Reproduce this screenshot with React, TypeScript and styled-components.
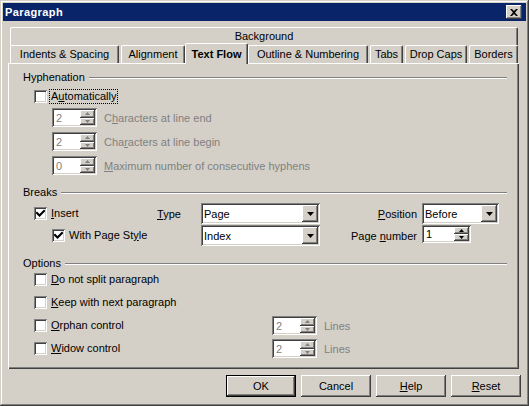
import React from 'react';
import styled, { createGlobalStyle, css } from 'styled-components';

const face = '#d4d0c8';
const shadow = '#808080';
const darkShadow = '#404040';
const highlight = '#ffffff';
const grayText = '#808080';

const raised = css`
  box-shadow: inset -1px -1px ${darkShadow}, inset 1px 1px ${highlight},
    inset -2px -2px ${shadow}, inset 2px 2px ${face};
`;

const sunken = css`
  box-shadow: inset 1px 1px ${shadow}, inset -1px -1px ${highlight},
    inset 2px 2px ${darkShadow}, inset -2px -2px ${face};
`;

const GlobalStyle = createGlobalStyle`
  html, body {
    margin: 0;
    padding: 0;
    background: ${face};
  }
  body {
    font-family: 'Liberation Sans', Arial, sans-serif;
    font-size: 11px;
    color: #000;
  }
`;

// "~" marks the mnemonic letter, the way the resource strings spell it
function Label({ text }: { text: string }) {
  const i = text.indexOf('~');
  if (i < 0) return <>{text}</>;
  return (
    <>
      {text.slice(0, i)}
      <u>{text[i + 1]}</u>
      {text.slice(i + 2)}
    </>
  );
}

function Arrow({ dir, color, w, h }: { dir: 'up' | 'down'; color: string; w: number; h: number }) {
  const points = dir === 'up' ? `0,${h} ${w},${h} ${w / 2},0` : `0,0 ${w},0 ${w / 2},${h}`;
  return (
    <svg width={w} height={h} viewBox={`0 0 ${w} ${h}`}>
      <polygon points={points} fill={color} />
    </svg>
  );
}

function Check({
  label,
  checked,
  focused,
  indent = 0,
}: {
  label: string;
  checked?: boolean;
  focused?: boolean;
  indent?: number;
}) {
  return (
    <CheckWrap $indent={indent}>
      <CheckBox>
        {checked && (
          <svg width="9" height="9" viewBox="0 0 9 9">
            <path d="M1 4 L3.5 6.5 L8 2" stroke="#000" strokeWidth="2" fill="none" strokeLinecap="square" />
          </svg>
        )}
      </CheckBox>
      <CheckText $focused={focused}>
        <Label text={label} />
      </CheckText>
    </CheckWrap>
  );
}

function Spin({
  value,
  width,
  height = 19,
  disabled,
}: {
  value: string;
  width: number;
  height?: number;
  disabled?: boolean;
}) {
  const arrow = disabled ? grayText : '#000';
  return (
    <SpinBox $width={width} $height={height}>
      <SpinValue $disabled={disabled}>{value}</SpinValue>
      <SpinArrows>
        <SpinArrow>
          <Arrow dir="up" color={arrow} w={5} h={3} />
        </SpinArrow>
        <SpinArrow>
          <Arrow dir="down" color={arrow} w={5} h={3} />
        </SpinArrow>
      </SpinArrows>
    </SpinBox>
  );
}

function Combo({ value, width }: { value: string; width: number }) {
  return (
    <ComboBox $width={width}>
      <ComboText>{value}</ComboText>
      <ComboButton>
        <Arrow dir="down" color="#000" w={7} h={4} />
      </ComboButton>
    </ComboBox>
  );
}

const tabs = [
  { title: 'Indents & Spacing', width: 109 },
  { title: 'Alignment', width: 64 },
  { title: 'Text Flow', width: 63, active: true },
  { title: 'Outline & Numbering', width: 120 },
  { title: 'Tabs', width: 33 },
  { title: 'Drop Caps', width: 62 },
  { title: 'Borders', width: 49 },
];

const hyphenFields = [
  { value: '2', label: 'C~haracters at line end' },
  { value: '2', label: 'Cha~racters at line begin' },
  { value: '0', label: '~Maximum number of consecutive hyphens' },
];

const options = [
  { label: '~Do not split paragraph' },
  { label: '~Keep with next paragraph' },
  { label: '~Orphan control', lines: '2' },
  { label: '~Widow control', lines: '2' },
];

export default function App() {
  return (
    <>
      <GlobalStyle />
      <Window>
        <TitleBar>
          <Title>Paragraph</Title>
          <CloseButton type="button" aria-label="Close">
            <svg width="8" height="7" viewBox="0 0 8 7">
              <path d="M0 0 H2 L4 2 L6 0 H8 L5 3.5 L8 7 H6 L4 5 L2 7 H0 L3 3.5 Z" fill="#000" />
            </svg>
          </CloseButton>
        </TitleBar>

        <TabStrip>
          <TabRow>
            <Tab $width={508}>Background</Tab>
          </TabRow>
          <TabRow>
            {tabs.map((t) => (
              <Tab key={t.title} $width={t.width} $active={t.active}>
                {t.title}
              </Tab>
            ))}
          </TabRow>
        </TabStrip>

        <Panel>
          <section>
            <Legend>Hyphenation</Legend>
            <Rows $top={6} $gap={5}>
              <Check label="A~utomatically" focused />
              {hyphenFields.map((f) => (
                <SpinRow key={f.label}>
                  <Spin value={f.value} width={45} disabled />
                  <Muted>
                    <Label text={f.label} />
                  </Muted>
                </SpinRow>
              ))}
            </Rows>
          </section>

          <section>
            <Legend>Breaks</Legend>
            <BreaksGrid>
              <Check label="~Insert" checked />
              <span>
                <Label text="~Type" />
              </span>
              <Combo value="Page" width={119} />
              <RightLabel>
                <Label text="~Position" />
              </RightLabel>
              <Combo value="Before" width={77} />

              <Check label="With Page St~yle" checked indent={18} />
              <span />
              <Combo value="Index" width={119} />
              <RightLabel>
                <Label text="Page ~number" />
              </RightLabel>
              <TopAligned>
                <Spin value="1" width={49} height={18} />
              </TopAligned>
            </BreaksGrid>
          </section>

          <section>
            <Legend>Options</Legend>
            <Rows $top={0} $gap={4}>
              {options.map((o) => (
                <OptionRow key={o.label}>
                  <Check label={o.label} />
                  {o.lines && (
                    <>
                      <Spin value={o.lines} width={45} disabled />
                      <Muted>Lines</Muted>
                    </>
                  )}
                </OptionRow>
              ))}
            </Rows>
          </section>
        </Panel>

        <ButtonBar>
          <PushButton type="button" $default>
            OK
          </PushButton>
          <PushButton type="button">Cancel</PushButton>
          <PushButton type="button">
            <Label text="~Help" />
          </PushButton>
          <PushButton type="button">
            <Label text="~Reset" />
          </PushButton>
        </ButtonBar>
      </Window>
    </>
  );
}

const Window = styled.div`
  box-sizing: border-box;
  width: 529px;
  height: 406px;
  padding: 3px;
  background: ${face};
  box-shadow: inset -1px -1px ${darkShadow}, inset 1px 1px ${face},
    inset -2px -2px ${shadow}, inset 2px 2px ${highlight};
  display: flex;
  flex-direction: column;
`;

const TitleBar = styled.div`
  height: 18px;
  flex: none;
  background: #0a246a;
  display: flex;
  align-items: center;
  justify-content: space-between;
  padding: 0 4px 0 2px;
`;

const Title = styled.span`
  color: #fff;
  font-weight: bold;
  letter-spacing: 0.4px;
`;

const CloseButton = styled.button`
  width: 16px;
  height: 14px;
  border: 0;
  padding: 0;
  background: ${face};
  ${raised};
  display: grid;
  place-items: center;
`;

const TabStrip = styled.div`
  margin: 6px 0 0 7px;
  flex: none;
`;

const TabRow = styled.div`
  display: flex;
  gap: 2px;
  height: 18px;
  align-items: flex-start;
`;

const Tab = styled.div<{ $width: number; $active?: boolean }>`
  box-sizing: border-box;
  flex: none;
  width: ${(p) => p.$width}px;
  height: 18px;
  background: ${face};
  border-top: 1px solid ${highlight};
  border-left: 1px solid ${highlight};
  border-right: 1px solid ${darkShadow};
  border-radius: 2px 2px 0 0;
  box-shadow: inset -1px 0 ${shadow};
  text-align: center;
  line-height: 16px;
  white-space: nowrap;

  ${(p) =>
    p.$active &&
    css`
      height: 21px;
      margin: -2px -2px 0;
      padding-top: 2px;
      font-weight: bold;
      position: relative;
      z-index: 1;
    `}
`;

const Panel = styled.div`
  box-sizing: border-box;
  flex: none;
  width: 511px;
  height: 306px;
  margin-left: 5px;
  padding: 8px 12px 0 15px;
  background: ${face};
  box-shadow: inset 1px 1px ${highlight}, inset -1px -1px ${darkShadow}, inset -2px -2px ${shadow};
  display: flex;
  flex-direction: column;
  gap: 11px;
`;

const Legend = styled.div`
  display: flex;
  align-items: center;
  height: 13px;
  line-height: 13px;

  &::after {
    content: '';
    flex: 1;
    margin-left: 4px;
    border-top: 1px solid ${shadow};
    border-bottom: 1px solid ${highlight};
  }
`;

const Rows = styled.div<{ $top: number; $gap: number }>`
  display: flex;
  flex-direction: column;
  gap: ${(p) => p.$gap}px;
  margin-top: ${(p) => p.$top}px;
  padding-left: 11px;
`;

const CheckWrap = styled.div<{ $indent: number }>`
  display: flex;
  align-items: center;
  gap: 3px;
  height: 13px;
  margin-left: ${(p) => p.$indent}px;
  white-space: nowrap;
`;

const CheckBox = styled.span`
  box-sizing: border-box;
  width: 13px;
  height: 13px;
  flex: none;
  background: #fff;
  ${sunken};
  display: grid;
  place-items: center;
`;

const CheckText = styled.span<{ $focused?: boolean }>`
  padding: 0 1px;
  line-height: 13px;
  ${(p) =>
    p.$focused &&
    css`
      outline: 1px dotted #000;
    `}
`;

const Muted = styled.span`
  color: ${grayText};
  white-space: nowrap;
`;

const SpinRow = styled.div`
  display: flex;
  align-items: center;
  gap: 7px;
  height: 19px;
  padding-left: 18px;
`;

const SpinBox = styled.div<{ $width: number; $height: number }>`
  box-sizing: border-box;
  flex: none;
  width: ${(p) => p.$width}px;
  height: ${(p) => p.$height}px;
  padding: 2px;
  background: #fff;
  ${sunken};
  display: flex;
`;

const SpinValue = styled.span<{ $disabled?: boolean }>`
  flex: 1;
  padding-left: 2px;
  display: flex;
  align-items: center;
  color: ${(p) => (p.$disabled ? grayText : '#000')};
`;

const SpinArrows = styled.div`
  width: 15px;
  display: flex;
  flex-direction: column;
`;

const SpinArrow = styled.div`
  flex: 1;
  background: ${face};
  ${raised};
  display: grid;
  place-items: center;
`;

const ComboBox = styled.div<{ $width: number }>`
  box-sizing: border-box;
  width: ${(p) => p.$width}px;
  height: 21px;
  padding: 2px;
  background: #fff;
  ${sunken};
  display: flex;
`;

const ComboText = styled.span`
  flex: 1;
  padding-left: 1px;
  display: flex;
  align-items: center;
`;

const ComboButton = styled.div`
  width: 16px;
  background: ${face};
  ${raised};
  display: grid;
  place-items: center;
`;

const BreaksGrid = styled.div`
  display: grid;
  grid-template-columns: 123px 44px 119px 102px auto;
  grid-auto-rows: 21px;
  row-gap: 1px;
  align-items: center;
  margin-top: 4px;
  padding-left: 11px;
`;

const RightLabel = styled.span`
  justify-self: end;
  margin-right: 5px;
  white-space: nowrap;
`;

const TopAligned = styled.div`
  align-self: start;
`;

const OptionRow = styled.div`
  display: grid;
  grid-template-columns: 231px 45px auto;
  column-gap: 7px;
  align-items: center;
  height: 19px;
`;

const ButtonBar = styled.div`
  display: flex;
  justify-content: flex-end;
  gap: 5px;
  margin-top: 6px;
  padding-right: 5px;
`;

const PushButton = styled.button<{ $default?: boolean }>`
  width: 70px;
  height: 22px;
  border: 0;
  padding: 0;
  font: inherit;
  color: #000;
  background: ${face};
  ${raised};

  ${(p) =>
    p.$default &&
    css`
      box-shadow: inset 0 0 0 1px #000, inset -2px -2px ${darkShadow}, inset 2px 2px ${highlight},
        inset -3px -3px ${shadow};
    `}
`;
